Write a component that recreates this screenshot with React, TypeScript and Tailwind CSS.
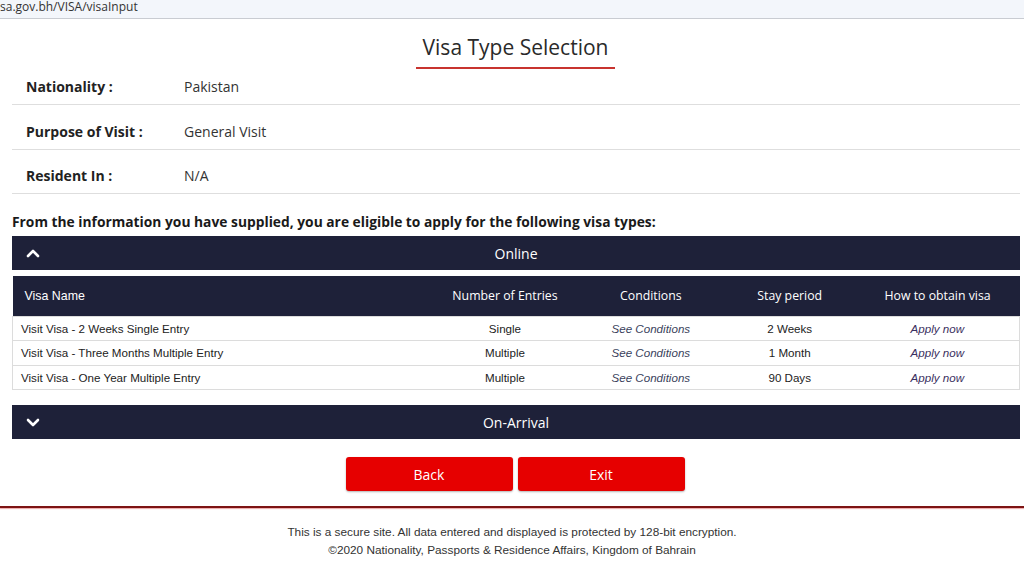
import React from "react";

const rows = [
  { name: "Visit Visa - 2 Weeks Single Entry", entries: "Single", stay: "2 Weeks" },
  { name: "Visit Visa - Three Months Multiple Entry", entries: "Multiple", stay: "1 Month" },
  { name: "Visit Visa - One Year Multiple Entry", entries: "Multiple", stay: "90 Days" },
];

const info = [
  { label: "Nationality :", value: "Pakistan" },
  { label: "Purpose of Visit :", value: "General Visit" },
  { label: "Resident In :", value: "N/A" },
];

function Chevron({ up }: { up?: boolean }) {
  return (
    <svg width="14" height="10" viewBox="0 0 14 10" className="shrink-0">
      <path
        d={up ? "M2 8 L7 3 L12 8" : "M2 3 L7 8 L12 3"}
        fill="none"
        stroke="white"
        strokeWidth="2.6"
        strokeLinecap="round"
        strokeLinejoin="round"
      />
    </svg>
  );
}

function SectionBar({ title, up }: { title: string; up?: boolean }) {
  return (
    <div className="relative flex h-[34px] items-center bg-[#1e2139] px-[14px] text-white">
      <Chevron up={up} />
      <div className="absolute inset-0 flex items-center justify-center text-[14px]">{title}</div>
    </div>
  );
}

export default function App() {
  return (
    <div className="min-h-[569px] w-[1024px] bg-white text-[#222]" style={{ fontFamily: "'Open Sans', 'Noto Sans', sans-serif" }}>
      {/* address bar strip */}
      <div className="h-[19px] border-b border-[#c9ccd2] bg-[#f3f6fb] text-[12px] leading-[13px] text-[#333]">
        <span>sa.gov.bh/VISA/visaInput</span>
      </div>

      {/* title */}
      <div className="flex justify-center pl-[7px] pt-[14px]">
        <div className="flex w-[199px] flex-col items-center">
          <h1 className="text-[21px] leading-[28px] text-[#2a2a2a]">Visa Type Selection</h1>
          <div className="mt-[6px] h-[2px] w-full bg-[#c8342f]" />
        </div>
      </div>

      <div className="ml-3 w-[1008px]">
        {/* applicant details */}
        {info.map((r, i) => (
          <div
            key={r.label}
            className={
              i === 0
                ? "flex h-[36px] items-center border-b border-[#dedede] pl-[14px] text-[14px]"
                : "flex h-[44.5px] items-center border-b border-[#dedede] pl-[14px] pt-[9px] text-[14px]"
            }
          >
            <div className="w-[158px] font-bold text-[#222]">{r.label}</div>
            <div className="text-[#333]">{r.value}</div>
          </div>
        ))}

        <p className="mt-[19px] text-[13.8px] font-bold leading-[18px] text-[#1a1a1a]">
          From the information you have supplied, you are eligible to apply for the following visa types:
        </p>

        <div className="mt-[5px]">
          <SectionBar title="Online" up />
        </div>

        {/* visa table */}
        <table className="mt-[6px] w-full border-collapse text-[11.6px]" style={{ fontFamily: "'Liberation Sans', Arial, sans-serif" }}>
          <colgroup>
            <col className="w-[420px]" />
            <col className="w-[146px]" />
            <col className="w-[146px]" />
            <col className="w-[132px]" />
            <col className="w-[164px]" />
          </colgroup>
          <thead>
            <tr className="h-[40px] bg-[#1e2139] text-[12.3px] text-white" style={{ fontFamily: "'Open Sans', sans-serif" }}>
              <th className="pl-[12px] pt-[2px] text-left text-[12.4px] font-normal" style={{ fontFamily: "'Liberation Sans', Arial, sans-serif" }}>Visa Name</th>
              <th className="font-normal">Number of Entries</th>
              <th className="font-normal">Conditions</th>
              <th className="font-normal">Stay period</th>
              <th className="font-normal">How to obtain visa</th>
            </tr>
          </thead>
          <tbody>
            {rows.map((r) => (
              <tr key={r.name} className="h-[24.5px] border border-[#dcdcdc] text-[#222]">
                <td className="pl-[8px]">{r.name}</td>
                <td className="text-center">{r.entries}</td>
                <td className="text-center italic text-[#3a3f5c]">See Conditions</td>
                <td className="text-center">{r.stay}</td>
                <td className="text-center italic text-[#3a3060]">Apply now</td>
              </tr>
            ))}
          </tbody>
        </table>

        <div className="mt-[15px]">
          <SectionBar title="On-Arrival" />
        </div>

        {/* actions */}
        <div className="mt-[18px] flex justify-center gap-[5px] pr-[2px]">
          <button className="h-[34px] w-[167px] rounded-[3px] bg-[#e60000] text-[14px] text-white shadow-[0_1px_2px_rgba(0,0,0,0.3)]">Back</button>
          <button className="h-[34px] w-[167px] rounded-[3px] bg-[#e60000] text-[14px] text-white shadow-[0_1px_2px_rgba(0,0,0,0.3)]">Exit</button>
        </div>
      </div>

      {/* footer */}
      <div className="mt-[15px] h-[2px] w-full bg-[#7d1414] shadow-[0_1px_1px_rgba(220,80,80,0.5)]" />
      <div className="pt-[15px] text-center text-[11.8px] leading-[18px] text-[#333]" style={{ fontFamily: "'Liberation Sans', Arial, sans-serif" }}>
        <div>This is a secure site. All data entered and displayed is protected by 128-bit encryption.</div>
        <div>©2020 Nationality, Passports &amp; Residence Affairs, Kingdom of Bahrain</div>
      </div>
    </div>
  );
}
